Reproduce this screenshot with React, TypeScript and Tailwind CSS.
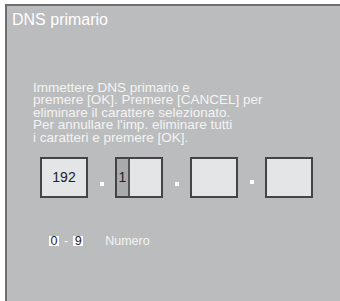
export default function App() {
  const font = { fontFamily: '"Liberation Sans", Arial, sans-serif' };
  return (
    <div className="w-[340px] h-[301px] bg-white pt-[4px] pl-[5px]" style={font}>
      <div className="h-[297px] bg-[#bbbcbe] border-t-2 border-l-2 border-[#6e6e70] flex flex-col">
        <div className="pl-[5px] pt-[6px] text-[16px] leading-none text-white">DNS primario</div>

        <div className="mt-[54px] pl-[26px] text-[13.5px] leading-[12.4px] text-[#f4f4f4]">
          <p>Immettere DNS primario e</p>
          <p>premere [OK]. Premere [CANCEL] per</p>
          <p>eliminare il carattere selezionato.</p>
          <p>Per annullare l&apos;imp. eliminare tutti</p>
          <p>i caratteri e premere [OK].</p>
        </div>

        <div className="mt-[13px] pl-[33px] flex items-start">
          <div className="w-[48px] h-[41px] border-2 border-[#444446] bg-[#e4e5e7] flex items-center justify-center text-[14px] text-[#222]">
            192
          </div>
          <div className="w-[27px] h-[41px] flex justify-center pt-[25px]">
            <div className="w-[4px] h-[4px] bg-white" />
          </div>
          <div className="w-[48px] h-[41px] border-2 border-[#444446] bg-[#e4e5e7] flex">
            <div className="w-[13px] h-full bg-[#a9aaac] border-r-2 border-[#555557] flex items-center justify-center text-[14px] text-[#222]">
              1
            </div>
          </div>
          <div className="w-[27px] h-[41px] flex justify-center pt-[25px]">
            <div className="w-[4px] h-[4px] bg-white" />
          </div>
          <div className="w-[48px] h-[41px] border-2 border-[#444446] bg-[#e4e5e7]" />
          <div className="w-[27px] h-[41px] flex justify-center pt-[23px]">
            <div className="w-[4px] h-[4px] bg-white" />
          </div>
          <div className="w-[48px] h-[41px] border-2 border-[#444446] bg-[#e4e5e7]" />
        </div>

        <div className="mt-[37px] pl-[42px] flex items-center text-[12.5px] leading-none">
          <span className="w-[10px] h-[10px] bg-white text-[#222] flex items-center justify-center">0</span>
          <span className="mx-[5px] text-white">-</span>
          <span className="w-[10px] h-[10px] bg-white text-[#222] flex items-center justify-center">9</span>
          <span className="ml-[22px] text-[#f4f4f4]">Numero</span>
        </div>
      </div>
    </div>
  );
}
